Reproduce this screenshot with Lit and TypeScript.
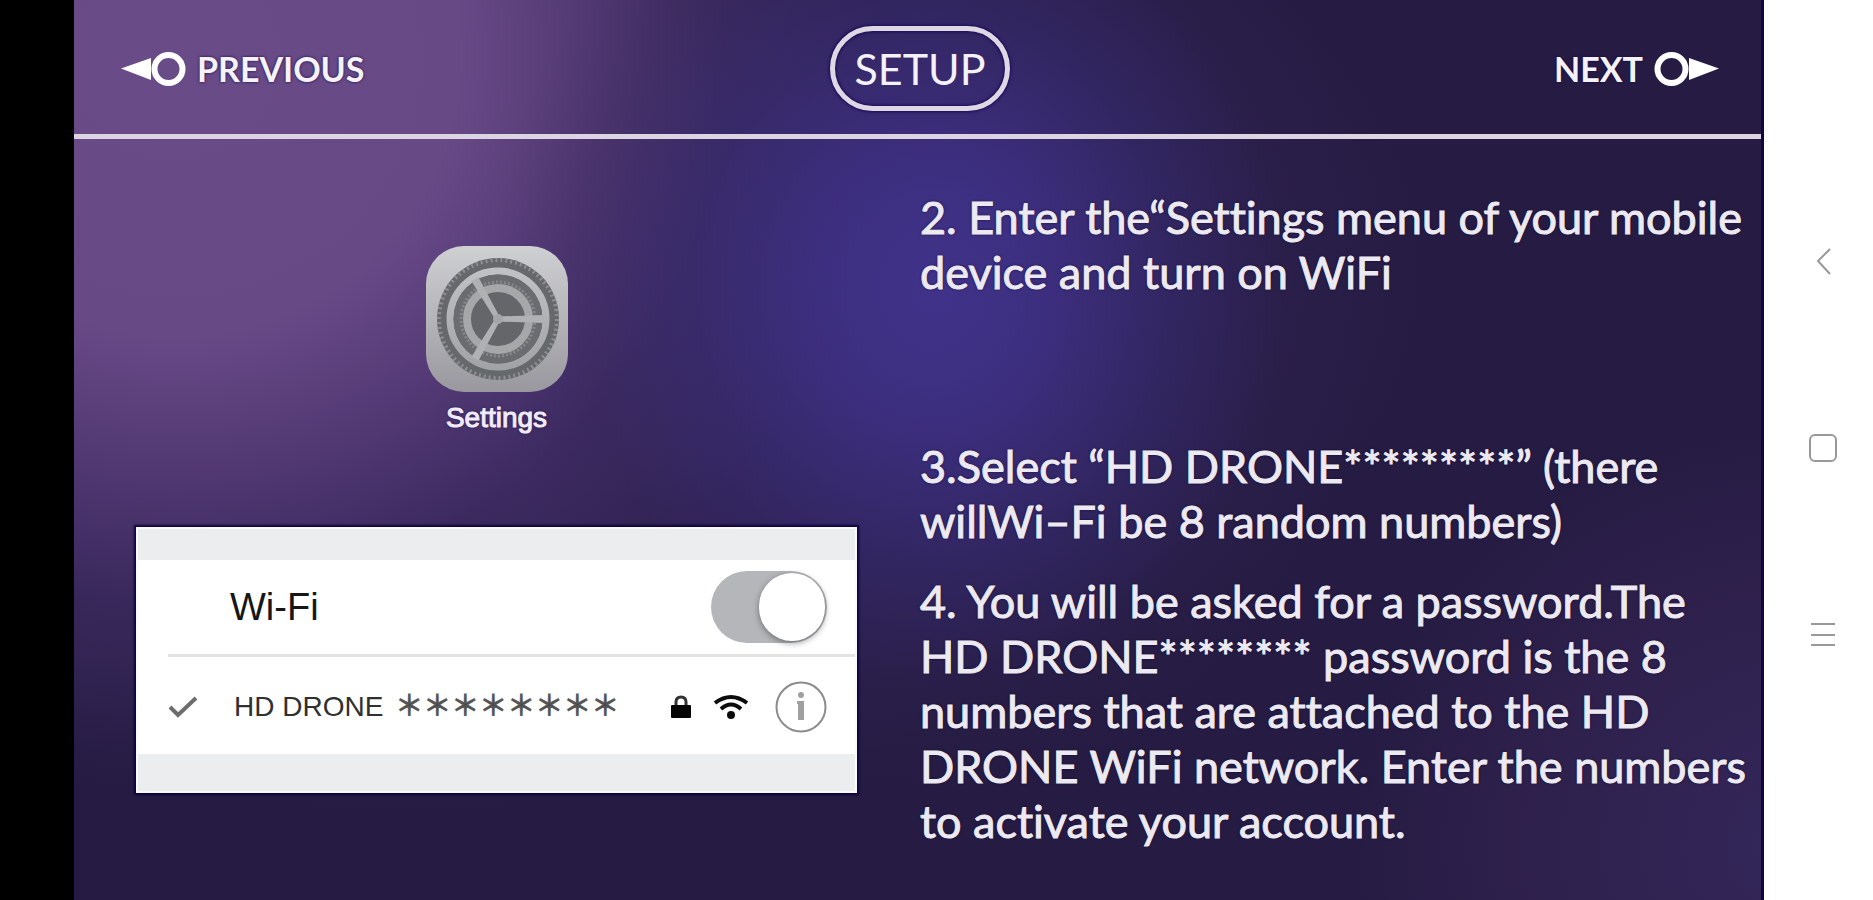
import { LitElement, html, css, svg } from "lit";
import { customElement, property, state } from "lit/decorators.js";

/** Rounded app tile with the gear wheel. */
@customElement("settings-tile")
export class SettingsTile extends LitElement {
  static styles = css`
    :host { display: flex; flex-direction: column; align-items: center; gap: 8px; }
    .tile { display: block; width: 142px; height: 146px; }
    .name {
      font: 28px/36px "Liberation Sans", Arial, sans-serif;
      color: #f1ecf6;
      text-shadow: 0 0 3px #1a0a48;
      -webkit-text-stroke: 1px #f1ecf6;
    }
  `;

  render() {
    const spokes = [0, 120, 240];
    return html`
      <svg class="tile" viewBox="0 0 142 146" aria-hidden="true">
        <defs>
          <linearGradient id="plate" x1="0" y1="0" x2="0" y2="1">
            <stop offset="0" stop-color="#cfd0d2" />
            <stop offset="0.5" stop-color="#b4b4b9" />
            <stop offset="1" stop-color="#98989e" />
          </linearGradient>
          <linearGradient id="ring" x1="0" y1="0" x2="0" y2="1">
            <stop offset="0" stop-color="#c0c1c3" />
            <stop offset="1" stop-color="#a2a3a6" />
          </linearGradient>
        </defs>
        <rect width="142" height="146" rx="38" fill="url(#plate)" />
        <circle cx="72" cy="73" r="61" fill="#66686b" />
        <circle cx="72" cy="73" r="59" fill="none" stroke="#8d8f92" stroke-width="4" stroke-dasharray="2 3" />
        <circle cx="72" cy="73" r="48" fill="none" stroke="url(#ring)" stroke-width="7" />
        <circle cx="72" cy="73" r="44.500" fill="#6a6c70" />
        <circle cx="72" cy="73" r="37" fill="none" stroke="#85878a" stroke-width="3" stroke-dasharray="2 2" />
        <circle cx="72" cy="73" r="31" fill="#64666a" stroke="#a5a7a9" stroke-width="8" />
        ${spokes.map(
          (a) => svg`<path d="M72 70.500L118 69V77L72 75.500Z" fill="#b0b1b3" transform="rotate(${a} 72 73)" />`
        )}
        <circle cx="72" cy="73" r="5" fill="#a5a6a9" />
      </svg>
      <span class="name">Settings</span>
    `;
  }
}

/** Wi-Fi settings panel with the switch and the joined network. */
@customElement("wifi-card")
export class WifiCard extends LitElement {
  @property() network = "HD DRONE";
  @state() private on = true;

  static styles = css`
    :host {
      display: block;
      box-sizing: border-box;
      background: #fff;
      border: 2px solid #fafafc;
      box-shadow: 0 0 2px 2px #0c0340;
      font-family: "Liberation Sans", Arial, "Noto Sans CJK SC", sans-serif;
      color: #161616;
    }
    .band { height: 31px; background: #ecedee; }
    .band-end { height: 37px; }
    .row { display: flex; align-items: center; box-sizing: border-box; }
    .switch-row {
      height: 97px;
      margin-left: 30px;
      padding: 0 28px 0 62px;
      justify-content: space-between;
      border-bottom: 3px solid #e3e3e4;
    }
    .title { font-size: 38px; line-height: 48px; }
    .switch {
      appearance: none;
      display: flex;
      box-sizing: border-box;
      width: 116px;
      height: 72px;
      margin: 0;
      padding: 2px;
      border-radius: 36px;
      background: #b4b6b9;
    }
    .switch::before {
      content: "";
      width: 66px;
      height: 68px;
      border-radius: 34px;
      background: #fff;
      box-shadow: 0 2px 6px #0006;
    }
    .switch:checked { justify-content: flex-end; }
    .net-row { height: 97px; padding: 2px 28px 0 30px; }
    .check { width: 32px; height: 24px; margin-right: 34px; }
    .ssid { font-size: 28px; line-height: 36px; color: #303030; white-space: nowrap; }
    .stars { margin-left: 12px; color: #4a4a4a; -webkit-text-stroke: 1px #5a5a5a; }
    .icons { display: flex; align-items: center; margin-left: auto; }
    .lock { width: 20px; height: 24px; margin-right: 22px; }
    .wifi { width: 36px; height: 26px; margin-right: 26px; }
    .info { display: block; padding: 0; border: 0; background: none; }
    .info-glyph { display: block; width: 52px; height: 52px; }
  `;

  private flip(e: Event) {
    this.on = (e.target as HTMLInputElement).checked;
  }

  render() {
    return html`
      <div class="band"></div>
      <div class="row switch-row">
        <label class="title" for="wifi">Wi-Fi</label>
        <input class="switch" id="wifi" type="checkbox" .checked=${this.on} @change=${this.flip} />
      </div>
      <div class="row net-row">
        <svg class="check" viewBox="0 0 32 24" fill="none" stroke="#6d6d6d" stroke-width="4" aria-hidden="true">
          <path d="M2 12L10 20L28 3" />
        </svg>
        <span class="ssid">${this.network}<span class="stars">＊＊＊＊＊＊＊＊</span></span>
        <span class="icons">
          <svg class="lock" viewBox="0 0 20 24" aria-hidden="true">
            <path d="M5 12V7Q5 2 10 2T15 7V12" fill="none" stroke="#333" stroke-width="3" />
            <rect y="10" width="20" height="13" rx="1" fill="#050505" />
          </svg>
          <svg class="wifi" viewBox="0 0 36 26" fill="none" stroke="#0c0c0c" stroke-width="4" aria-hidden="true">
            <path d="M2 9Q18 -3 34 9" />
            <path d="M8 15Q18 6 28 15" />
            <circle cx="18" cy="21" r="4" fill="#0c0c0c" stroke="none" />
          </svg>
          <button class="info" aria-label="Network details">
            <svg class="info-glyph" viewBox="0 0 52 52" fill="#a0a0a0" aria-hidden="true">
              <circle cx="26" cy="26" r="24.500" fill="none" stroke="#8c8c8c" stroke-width="2" />
              <circle cx="26" cy="14" r="3" />
              <path d="M22 20H29V39H23V23H22Z" />
            </svg>
          </button>
        </span>
      </div>
      <div class="band band-end"></div>
    `;
  }
}

@customElement("app-root")
export class AppRoot extends LitElement {
  static styles = css`
    :host {
      display: flex;
      min-height: 100vh;
      background: #fff;
      font-family: Lato, "Noto Sans", sans-serif;
      font-variant-ligatures: none;
    }
    .notch { flex: 0 0 74px; background: #000; }
    .screen {
      flex: 1;
      min-width: 0;
      box-sizing: border-box;
      border-right: 3px solid #12063c;
      background:
        radial-gradient(ellipse 26% 56% at 51% 32%, #403289 0%, #3e3085e0 25%, #352a7090 55%, #2c215030 80%, #261c4300 100%),
        radial-gradient(ellipse 42% 78% at 6% 6%, #694b88 0%, #674986 40%, #583d79c8 60%, #432f6780 78%, #261c4300 100%),
        radial-gradient(ellipse 60% 60% at 20% 30%, #3f2b6a 0%, #3a285fb0 45%, #261c4300 100%),
        radial-gradient(ellipse 26% 46% at 102% 94%, #33275a 0%, #31224fc0 60%, #261c4300 100%),
        #261c43;
    }
    .bar {
      display: grid;
      grid-template-columns: 1fr auto 1fr;
      align-items: center;
      box-sizing: border-box;
      height: 139px;
      padding: 3px 42px 0 47px;
      border-bottom: 5px solid #ddd4e2;
    }
    button { font: inherit; color: inherit; }
    .step {
      display: flex;
      align-items: center;
      gap: 10px;
      padding: 0;
      border: 0;
      background: none;
      color: #f6f3f8;
      font-size: 34px;
      line-height: 40px;
      font-weight: 700;
      text-shadow: 0 0 3px #14064a;
    }
    .next { justify-self: end; }
    .arrow { width: 66px; height: 38px; fill: #fff; }
    .pill {
      box-sizing: border-box;
      height: 85px;
      padding: 0 19px;
      border: 5px solid #ddd8e4;
      border-radius: 43px;
      color: #f4f1f8;
      font-size: 43px;
      line-height: 50px;
      font-weight: 400;
      margin: 0;
      display: flex;
      align-items: center;
      box-shadow: 0 0 3px 1px #1a0a58, inset 0 0 3px 1px #1a0a58;
    }
    .body { display: grid; grid-template-columns: 783px 1fr; }
    .left {
      display: flex;
      flex-direction: column;
      gap: 91px;
      padding: 107px 0 0 62px;
    }
    .steps {
      padding: 51px 0 0 63px;
      color: #eceaf0;
      font-size: 45px;
      line-height: 55px;
      white-space: nowrap;
      text-shadow: 0 0 3px #0c0238;
      -webkit-text-stroke: 1px #eceaf0;
    }
    .line { margin: 0; }
    .two { margin-bottom: 139px; }
    .three { margin-bottom: 25px; }
    .rail {
      flex: 0 0 109px;
      box-sizing: border-box;
      display: flex;
      flex-direction: column;
      align-items: center;
      gap: 147px;
      padding: 241px 0 0 8px;
    }
    .key { display: block; padding: 0; border: 0; background: none; }
    .glyph { display: block; width: 40px; height: 40px; fill: none; stroke: #999; stroke-width: 2; }
  `;

  render() {
    return html`
      <div class="notch"></div>
      <main class="screen">
        <header class="bar">
          <button class="step">
            <svg class="arrow" viewBox="0 0 66 38" aria-hidden="true">
              <path d="M0 18.500L30 8V30Z" />
              <circle cx="47.500" cy="19" r="14" fill="none" stroke="#fff" stroke-width="6" />
            </svg>
            PREVIOUS
          </button>
          <h1 class="pill">SETUP</h1>
          <button class="step next">
            NEXT
            <svg class="arrow" viewBox="0 0 66 38" aria-hidden="true">
              <path d="M66 18.500L36 8V30Z" />
              <circle cx="18.500" cy="19" r="14" fill="none" stroke="#fff" stroke-width="6" />
            </svg>
          </button>
        </header>
        <section class="body">
          <div class="left">
            <settings-tile></settings-tile>
            <wifi-card></wifi-card>
          </div>
          <div class="steps">
            <p class="line two">2. Enter the“Settings menu of your mobile<br />device and turn on WiFi</p>
            <p class="line three">3.Select “HD DRONE*********” (there<br />willWi–Fi be 8 random numbers)</p>
            <p class="line">
              4. You will be asked for a password.The<br />HD DRONE******** password is the 8<br />numbers
              that are attached to the HD<br />DRONE WiFi network. Enter the numbers<br />to activate your account.
            </p>
          </div>
        </section>
      </main>
      <nav class="rail">
        <button class="key" aria-label="Back">
          <svg class="glyph" viewBox="0 0 40 40"><path d="M27 8L15 20L27 33" /></svg>
        </button>
        <button class="key" aria-label="Home">
          <svg class="glyph" viewBox="0 0 40 40"><rect x="7" y="7" width="26" height="26" rx="5" /></svg>
        </button>
        <button class="key" aria-label="Menu">
          <svg class="glyph" viewBox="0 0 40 40"><path d="M8 9H32M8 20H32M8 30H32" /></svg>
        </button>
      </nav>
    `;
  }
}
